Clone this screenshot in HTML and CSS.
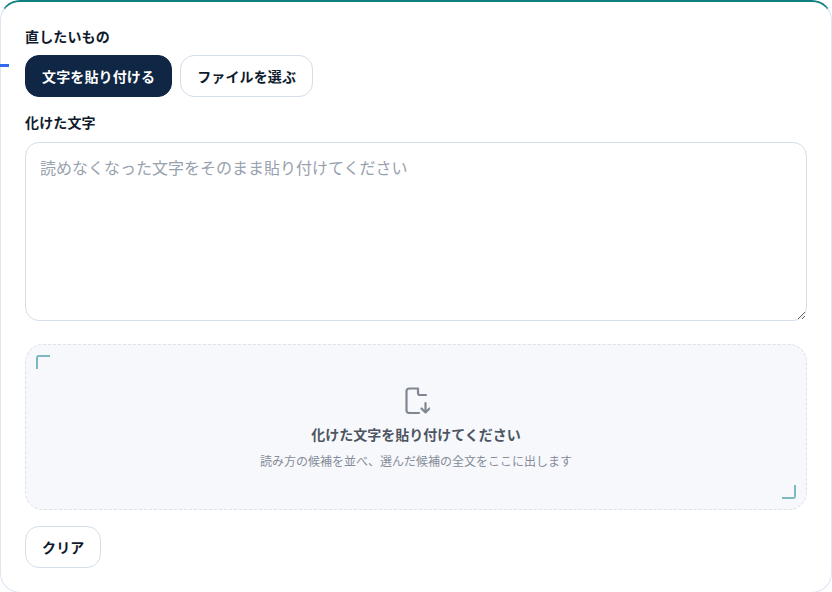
FILE: index.html
```html
<!DOCTYPE html>
<html lang="ja">
<head>
  <meta charset="UTF-8">
  <meta name="viewport" content="width=device-width, initial-scale=1.0">
  <title>文字化け修復</title>
  <link rel="stylesheet" href="styles.css">
</head>
<body>
  <div class="rail-tick"></div>
  <main class="card">
    <div class="field-label first">直したいもの</div>
    <div class="tabs">
      <button class="btn active">文字を貼り付ける</button>
      <button class="btn">ファイルを選ぶ</button>
    </div>
    <label class="field-label second" for="source">化けた文字</label>
    <textarea id="source" class="source" placeholder="読めなくなった文字をそのまま貼り付けてください"></textarea>
    <section class="result">
      <span class="corner top-left"></span>
      <span class="corner bottom-right"></span>
      <svg class="result-icon" width="28" height="28" viewBox="0 0 28 28" fill="none" stroke="#7f8793" stroke-width="2.200" stroke-linecap="round" stroke-linejoin="round">
        <path d="M17 26H7A2.500 2.500 0 0 1 4.500 23.500V4A2.500 2.500 0 0 1 7 1.500H16V6A2 2 0 0 0 18 8H24"/>
        <path d="M23.500 16V25.500M19.500 21.500L23.500 25.500L27.500 21.500"/>
      </svg>
      <div class="result-title">化けた文字を貼り付けてください</div>
      <div class="result-note">読み方の候補を並べ、選んだ候補の全文をここに出します</div>
    </section>
    <button class="btn clear">クリア</button>
  </main>
</body>
</html>
```

FILE: styles.css
```css
* {
  box-sizing: border-box;
}

body {
  margin: 0;
  height: 592px;
  overflow: hidden;
  background-color: #ffffff;
  font-family: Inter, "Noto Sans CJK JP", sans-serif;
  color: #0f1b2d;
}

.rail-tick {
  position: absolute;
  top: 64px;
  left: 0;
  width: 9px;
  height: 3px;
  background-color: #2f6bed;
}

.card {
  height: 593px;
  padding: 25px 24px 0;
  background-color: #ffffff;
  border: 1px solid #dde5f0;
  border-top: 2px solid #0f7f80;
  border-radius: 20px;
}

.field-label {
  display: block;
  font-size: 14px;
  font-weight: 700;
  line-height: 20px;
  letter-spacing: 0.01em;
}

.tabs {
  display: flex;
  gap: 8px;
  margin-top: 8px;
}

.btn {
  height: 42px;
  padding: 0 16px;
  background-color: #ffffff;
  border: 1px solid #d5deea;
  border-radius: 14px;
  font-family: inherit;
  font-size: 14px;
  font-weight: 700;
  letter-spacing: 0.01em;
  color: #0f1b2d;
}

.btn.active {
  background-color: #0f2744;
  border-color: #0f2744;
  color: #ffffff;
}

.second {
  margin-top: 16px;
}

.source {
  display: block;
  width: 782px;
  height: 179px;
  margin-top: 9px;
  padding: 13px 14px;
  background-color: #ffffff;
  border: 1px solid #d5deea;
  border-radius: 14px;
  font-family: inherit;
  font-size: 16px;
  line-height: 24px;
  color: #0f1b2d;
  outline: none;
}

.source::placeholder {
  color: #98a1ae;
}

.result {
  position: relative;
  display: flex;
  flex-direction: column;
  align-items: center;
  width: 782px;
  height: 166px;
  margin-top: 23px;
  padding-top: 42px;
  background-color: #f7f8fc;
  border: 1px dashed #dde2ea;
  border-radius: 18px;
}

.corner {
  position: absolute;
  width: 14px;
  height: 14px;
  border: 0 solid #7fb9c0;
}

.corner.top-left {
  top: 10px;
  left: 10px;
  border-top-width: 2px;
  border-left-width: 2px;
  border-top-left-radius: 3px;
}

.corner.bottom-right {
  right: 10px;
  bottom: 10px;
  border-right-width: 2px;
  border-bottom-width: 2px;
  border-bottom-right-radius: 3px;
}

.result-title {
  margin-top: 10px;
  font-size: 14px;
  font-weight: 700;
  line-height: 20px;
  color: #4d5562;
}

.result-note {
  margin-top: 8px;
  font-size: 12px;
  line-height: 18px;
  color: #858c98;
}

.clear {
  display: block;
  margin-top: 16px;
}
```
